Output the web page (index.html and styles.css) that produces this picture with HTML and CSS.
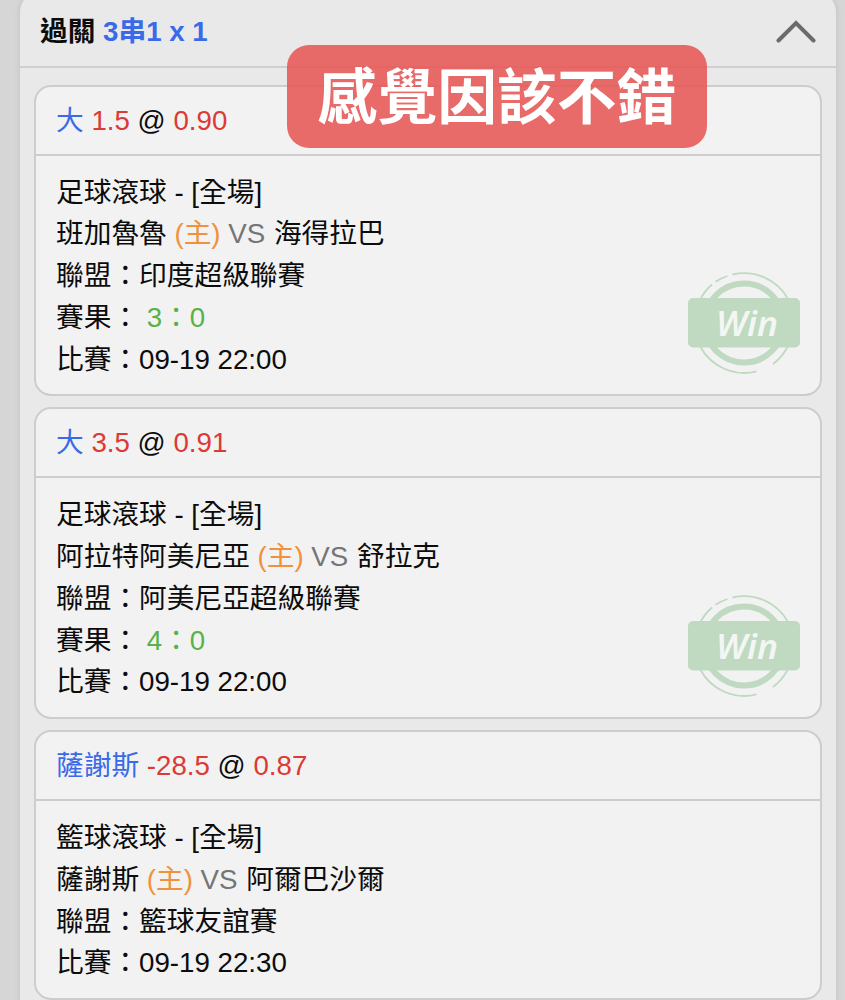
FILE: index.html
```html
<!DOCTYPE html>
<html lang="zh-TW">
<head>
  <meta charset="UTF-8">
  <title>過關 3串1</title>
  <link rel="stylesheet" href="styles.css">
</head>
<body>

<!-- Win stamp, shared by the settled bets -->
<svg class="defs" width="0" height="0">
  <symbol id="stamp" viewBox="0 0 112 104">
    <g fill="none" stroke="#bfdac1">
      <circle cx="56" cy="52" r="39.5" stroke-width="6"/>
      <path stroke-width="1.8" d="M44.5 3.5A50 50 0 0 1 100 28M39.5 5A50 50 0 0 0 27.5 10.8M24 13.5A50 50 0 0 0 12.5 28M12.5 76A50 50 0 0 0 68.5 100.4M85 93A50 50 0 0 0 99.5 76"/>
    </g>
    <rect y="27" width="112" height="49.5" rx="5" fill="#bfdac1"/>
  </symbol>
</svg>

<div class="panel">
  <div class="panel-head">
    <div>過關 <span class="blue">3串1 x 1</span></div>
    <svg class="arrow" width="40" height="24" viewBox="0 0 40 24">
      <path d="M2.5 21.5L20 4L37.5 21.5" fill="none" stroke="#6b6b6b" stroke-width="4" stroke-linecap="round"/>
    </svg>
  </div>

  <div class="bets">
    <div class="card">
      <div class="card-head"><span class="blue">大</span> <span class="red">1.5</span> @ <span class="red">0.90</span></div>
      <div class="card-body">
        <div>足球滾球 - [全場]</div>
        <div>班加魯魯 <span class="home">(主)</span> <span class="vs">VS</span> 海得拉巴</div>
        <div>聯盟：印度超級聯賽</div>
        <div>賽果： <span class="green">3：0</span></div>
        <div>比賽：09-19 22:00</div>
        <svg class="stamp" viewBox="0 0 112 104"><use href="#stamp"/><text x="28" y="64.5" textLength="62" lengthAdjust="spacingAndGlyphs">Win</text></svg>
      </div>
    </div>

    <div class="card">
      <div class="card-head"><span class="blue">大</span> <span class="red">3.5</span> @ <span class="red">0.91</span></div>
      <div class="card-body">
        <div>足球滾球 - [全場]</div>
        <div>阿拉特阿美尼亞 <span class="home">(主)</span> <span class="vs">VS</span> 舒拉克</div>
        <div>聯盟：阿美尼亞超級聯賽</div>
        <div>賽果： <span class="green">4：0</span></div>
        <div>比賽：09-19 22:00</div>
        <svg class="stamp" viewBox="0 0 112 104"><use href="#stamp"/><text x="28" y="64.5" textLength="62" lengthAdjust="spacingAndGlyphs">Win</text></svg>
      </div>
    </div>

    <div class="card">
      <div class="card-head"><span class="blue">薩謝斯</span> <span class="red">-28.5</span> @ <span class="red">0.87</span></div>
      <div class="card-body">
        <div>籃球滾球 - [全場]</div>
        <div>薩謝斯 <span class="home">(主)</span> <span class="vs">VS</span> 阿爾巴沙爾</div>
        <div>聯盟：籃球友誼賽</div>
        <div>比賽：09-19 22:30</div>
      </div>
    </div>
  </div>
</div>

<div class="banner">感覺因該不錯</div>

</body>
</html>
```
FILE: styles.css
```css
* {
  box-sizing: border-box;
}

body {
  margin: 0;
  height: 1000px;
  overflow: hidden;
  position: relative;
  background: #d6d6d6;
  color: #0c0c0c;
  font-family: "Liberation Sans", "Noto Sans CJK TC", sans-serif;
  font-size: 27.7px;
}

.defs {
  position: absolute;
}

.panel {
  margin: -8px 9px 0 20px;
  height: 1030px;
  background: #e9e9e9;
  border-radius: 20px;
  box-shadow: 0 0 6px rgba(0, 0, 0, 0.1);
}

.panel-head {
  display: flex;
  justify-content: space-between;
  align-items: center;
  height: 76px;
  padding: 0 20px;
  border-bottom: 2px solid #cfcfcf;
  font-weight: bold;
}

.arrow {
  display: block;
  margin-top: 3px;
}

.bets {
  display: flex;
  flex-direction: column;
  gap: 11px;
  padding: 16.5px 14px 0;
}

.card {
  background: #f2f2f2;
  border: 2px solid #cdcdcd;
  border-radius: 17px;
}

.card-head {
  height: 69px;
  padding: 0 20px;
  border-bottom: 2px solid #cdcdcd;
  line-height: 67.5px;
}

.card-body {
  position: relative;
  padding: 16px 20px 14px;
  line-height: 41.75px;
}

.card-body > div {
  height: 41.75px;
  white-space: nowrap;
}

.blue {
  color: #3a6ae8;
}

.red {
  color: #dc3a35;
}

.green {
  color: #58b247;
}

.home {
  color: #f0913c;
}

.vs {
  color: #757575;
  margin-right: 1px;
}

.stamp {
  position: absolute;
  right: 20px;
  bottom: 19px;
  width: 112px;
  height: 104px;
}

.stamp text {
  fill: #f4f6f4;
  font-family: "Noto Sans", "Open Sans", sans-serif;
  font-size: 35px;
  font-style: italic;
  font-weight: 600;
}

.banner {
  position: absolute;
  left: 287px;
  top: 45px;
  width: 420px;
  height: 103px;
  border-radius: 22px;
  background: rgba(230, 88, 86, 0.88);
  color: #fff;
  font-family: "Noto Sans CJK TC", sans-serif;
  font-size: 59.8px;
  font-weight: bold;
  line-height: 97px;
  text-align: center;
}
```
